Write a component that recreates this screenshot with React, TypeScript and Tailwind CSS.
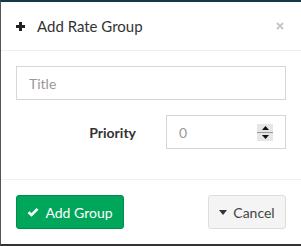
import React from 'react';

const App: React.FC = () => {
  return (
    <div className="w-[301px] h-[246px] bg-white border-t-2 border-t-[#123b48] border-l border-l-[#555] border-b-2 border-b-[#333] flex flex-col font-['Lato','Liberation_Sans',sans-serif] text-[#333]">
      {/* Header */}
      <div className="h-[49px] flex items-center pl-[15px] pr-[17px] border-b border-[#f0f0f0]">
        <svg width="9" height="9" viewBox="0 0 9 9" className="mr-[12px]">
          <rect x="3" y="0" width="3" height="9" fill="#222" />
          <rect x="0" y="3" width="9" height="3" fill="#222" />
        </svg>
        <span className="text-[15px] leading-none">Add Rate Group</span>
        <svg width="8" height="8" viewBox="0 0 8 8" className="ml-auto">
          <path d="M1 1L7 7M7 1L1 7" stroke="#c8c8c8" strokeWidth="2" />
        </svg>
      </div>

      {/* Body */}
      <div className="flex-1 px-[15px] pt-[15px] flex flex-col gap-[15px] border-b border-[#f0f0f0]">
        <input
          placeholder="Title"
          className="h-[34px] w-full border border-[#d2d6de] px-[12px] text-[14px] placeholder:text-[#999] outline-none"
        />
        <div className="flex items-center">
          <label className="w-[150px] text-right pr-[30px] text-[14px] font-bold">Priority</label>
          <div className="w-[120px] h-[34px] border border-[#d2d6de] flex items-center pl-[12px] pr-[12px]">
            <span className="text-[14px] text-[#999] flex-1">0</span>
            <div className="w-[16px] h-[17px] bg-[#e6e6e6] flex flex-col items-center justify-between py-[2px]">
              <svg width="7" height="4" viewBox="0 0 7 4"><path d="M3.5 0L7 4H0z" fill="#111" /></svg>
              <div className="w-full h-px bg-[#999]" />
              <svg width="7" height="4" viewBox="0 0 7 4"><path d="M0 0H7L3.5 4z" fill="#111" /></svg>
            </div>
          </div>
        </div>
      </div>

      {/* Footer */}
      <div className="h-[64px] flex items-center justify-between px-[15px]">
        <button className="h-[34px] w-[108px] bg-[#00a65a] border border-[#008d4c] rounded-[3px] text-white text-[14px] flex items-center justify-center gap-[6px]">
          <svg width="12" height="10" viewBox="0 0 12 10"><path d="M1.5 5.2L4.5 8L10.5 1.8" stroke="#fff" strokeWidth="2.6" fill="none" /></svg>
          Add Group
        </button>
        <button className="h-[34px] w-[78px] bg-[#f4f4f4] border border-[#ddd] rounded-[3px] text-[#444] text-[14px] flex items-center justify-center gap-[6px]">
          <svg width="8" height="5" viewBox="0 0 8 5"><path d="M0 0H8L4 5z" fill="#333" /></svg>
          Cancel
        </button>
      </div>
    </div>
  );
};

export default App;
